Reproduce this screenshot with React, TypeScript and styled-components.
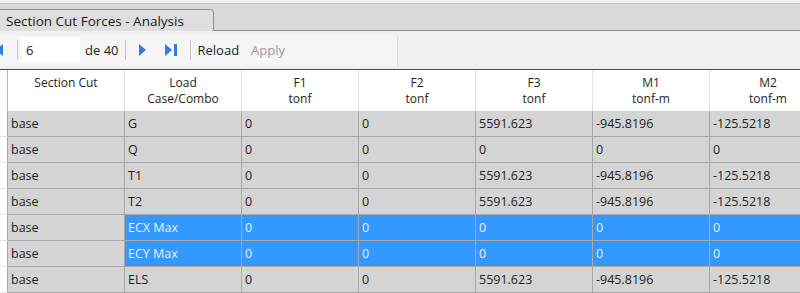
import React from "react";
import styled, { createGlobalStyle } from "styled-components";

const GlobalStyle = createGlobalStyle`
    html, body {
        margin: 0;
        padding: 0;
        background: #f0f0f0;
    }
    body {
        font-family: "Open Sans", "Noto Sans", "Liberation Sans", sans-serif;
        font-size: 12px;
        color: #1e1e1e;
    }
`;

const Window = styled.div`
    width: 800px;
    height: 293px;
    overflow: hidden;
    display: flex;
    flex-direction: column;
    background: #f0f0f0;
`;

const TabStrip = styled.div`
    height: 27px;
    margin-top: 3px;
    border-top: 1px solid #c4c4c4;
    border-bottom: 1px solid #8f8f8f;
    background: #d9d9d9;
    display: flex;
    align-items: flex-end;
`;

const Tab = styled.div`
    width: 215px;
    height: 22px;
    margin-left: -1px;
    margin-bottom: -1px;
    box-sizing: border-box;
    border: 1px solid #8f8f8f;
    border-bottom: none;
    border-top-right-radius: 4px;
    background: #dedede;
    display: flex;
    align-items: center;
    padding-left: 6px;
    font-size: 13.5px;
    color: #1a1a1a;
    white-space: nowrap;
`;

const Toolbar = styled.div`
    height: 39px;
    display: flex;
    align-items: center;
    background: #f0f0f0;
    font-size: 13px;
`;

const ToolStrip = styled.div`
    width: 398px;
    height: 31px;
    box-sizing: border-box;
    display: flex;
    align-items: center;
    background: #f5f5f5;
    border-right: 1px solid #d6d6d6;
    border-top-right-radius: 3px;
`;

const Separator = styled.div<{ $l: number; $r: number }>`
    width: 1px;
    height: 20px;
    background: #c8c8c8;
    margin: 0 ${(p) => p.$r}px 0 ${(p) => p.$l}px;
`;

const PageInput = styled.div`
    width: 59px;
    height: 26px;
    background: #ffffff;
    display: flex;
    align-items: center;
    padding-left: 5px;
    box-sizing: border-box;
`;

const Label = styled.span<{ $muted?: boolean; $ml?: number }>`
    color: ${(p) => (p.$muted ? "#9a9a9a" : "#1e1e1e")};
    margin-left: ${(p) => p.$ml ?? 0}px;
    white-space: nowrap;
`;

const IconButton = styled.div<{ $ml: number }>`
    display: flex;
    align-items: center;
    margin-left: ${(p) => p.$ml}px;
`;

const Grid = styled.div`
    border-top: 1px solid #4a4a4a;
    display: grid;
    grid-template-columns: 8px repeat(7, 117px);
    grid-auto-rows: 26px;
    grid-template-rows: 41px;
    background: #ffffff;
    font-size: 12.5px;
`;

const HeadCell = styled.div<{ $stub?: boolean }>`
    box-sizing: border-box;
    border-right: 1px solid ${(p) => (p.$stub ? "#b5b5b5" : "#e3e3e3")};
    background: #ffffff;
    text-align: center;
    padding-top: 5px;
    line-height: 16px;
    font-size: 12px;
    color: #1e1e1e;
    white-space: nowrap;
    overflow: hidden;
`;

const Stub = styled.div`
    box-sizing: border-box;
    border-right: 1px solid #a8a8a8;
    border-bottom: 1px solid #e6e6e6;
    background: #ffffff;
`;

const Cell = styled.div<{ $selected?: boolean }>`
    box-sizing: border-box;
    border-right: 1px solid #a8a8a8;
    border-bottom: 1px solid #a8a8a8;
    background: ${(p) => (p.$selected ? "#3399ff" : "#d4d4d4")};
    color: ${(p) => (p.$selected ? "#e6f1ff" : "#1e1e1e")};
    display: flex;
    align-items: center;
    padding-left: 3px;
    white-space: nowrap;
    overflow: hidden;
`;

const blue = "#2a7fe0";

const PrevIcon = () => (
    <svg width="9" height="12" viewBox="0 0 9 12" style={{ marginLeft: -6 }}>
        <polygon points="9,0 9,12 2,6" fill={blue} />
    </svg>
);

const NextIcon = () => (
    <svg width="8" height="12" viewBox="0 0 8 12">
        <polygon points="0,0 0,12 7,6" fill={blue} />
    </svg>
);

const LastIcon = () => (
    <svg width="12" height="12" viewBox="0 0 12 12">
        <polygon points="0,0 0,12 7,6" fill={blue} />
        <rect x="9" y="0" width="3" height="12" fill={blue} />
    </svg>
);

const headers: string[][] = [
    ["Section Cut"],
    ["Load", "Case/Combo"],
    ["F1", "tonf"],
    ["F2", "tonf"],
    ["F3", "tonf"],
    ["M1", "tonf-m"],
    ["M2", "tonf-m"],
];

const full = ["5591.623", "-945.8196", "-125.5218"];
const zero = ["0", "0", "0"];

const rows = [
    { combo: "G", vals: full, selected: false },
    { combo: "Q", vals: zero, selected: false },
    { combo: "T1", vals: full, selected: false },
    { combo: "T2", vals: full, selected: false },
    { combo: "ECX Max", vals: zero, selected: true },
    { combo: "ECY Max", vals: zero, selected: true },
    { combo: "ELS", vals: full, selected: false },
];

const App: React.FC = () => {
    return (
        <Window>
            <GlobalStyle />
            <TabStrip>
                <Tab>Section Cut Forces - Analysis</Tab>
            </TabStrip>
            <Toolbar>
                <ToolStrip>
                    <PrevIcon />
                    <Separator $l={14} $r={3} />
                    <PageInput>6</PageInput>
                    <Label $ml={5}>de 40</Label>
                    <Separator $l={6} $r={0} />
                    <IconButton $ml={13}>
                        <NextIcon />
                    </IconButton>
                    <IconButton $ml={18}>
                        <LastIcon />
                    </IconButton>
                    <Separator $l={13} $r={7} />
                    <Label>Reload</Label>
                    <Label $muted $ml={12}>
                        Apply
                    </Label>
                </ToolStrip>
            </Toolbar>
            <Grid>
                <HeadCell $stub />
                {headers.map((h, i) => (
                    <HeadCell key={i}>
                        {h.map((line, j) => (
                            <div key={j}>{line}</div>
                        ))}
                    </HeadCell>
                ))}
                {rows.map((r, i) => (
                    <React.Fragment key={i}>
                        <Stub />
                        <Cell>base</Cell>
                        <Cell $selected={r.selected}>{r.combo}</Cell>
                        <Cell $selected={r.selected}>0</Cell>
                        <Cell $selected={r.selected}>0</Cell>
                        {r.vals.map((v, k) => (
                            <Cell key={k} $selected={r.selected}>
                                {v}
                            </Cell>
                        ))}
                    </React.Fragment>
                ))}
            </Grid>
        </Window>
    );
};

export default App;
